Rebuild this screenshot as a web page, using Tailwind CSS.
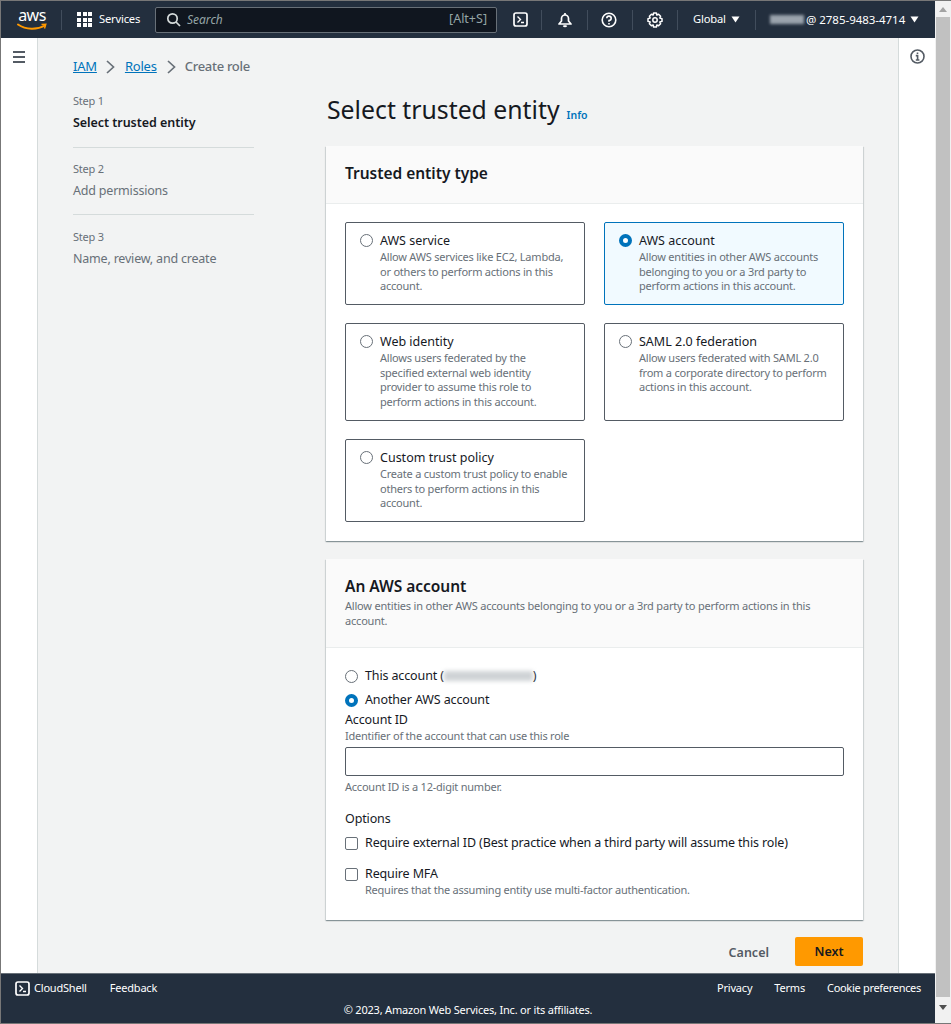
<!DOCTYPE html>
<html lang="en">
<head>
    <meta charset="UTF-8">
    <title>Create role | IAM</title>
    <script src="https://cdn.jsdelivr.net/npm/@tailwindcss/browser@4"></script>
</head>
<body class="h-[1024px] overflow-hidden bg-white font-['Noto_Sans',sans-serif] text-[#16191f]">
<div class="flex h-[1024px] flex-col border-t border-b border-l border-[#777]">
  <div class="flex min-h-0 flex-1">
    <div class="flex w-[934px] flex-col">

      <!-- Top bar -->
      <header class="flex h-[37px] shrink-0 items-center bg-[#232f3e] text-white">
        <div class="relative ml-[16px] h-[30px] w-[30px] shrink-0">
          <span class="block text-center text-[16px] leading-[20px] tracking-[-0.5px]">aws</span>
          <svg class="absolute top-[17px] left-0" width="30" height="11" viewBox="0 0 30 11" fill="none"><path d="M1 2.5C9 8 20 8 28 3.5" stroke="#f90" stroke-width="2" stroke-linecap="round"/><path d="M24.5 2.5L28.8 2.2L27.5 6.5" stroke="#f90" stroke-width="1.4"/></svg>
        </div>
        <div class="ml-[14px] h-[20px] w-px bg-[#414d5c]"></div>
        <div class="ml-[15px] grid h-[15px] w-[15px] grid-cols-3 gap-[1.5px]">
          <i class="bg-white"></i><i class="bg-white"></i><i class="bg-white"></i><i class="bg-white"></i><i class="bg-white"></i><i class="bg-white"></i><i class="bg-white"></i><i class="bg-white"></i><i class="bg-white"></i>
        </div>
        <span class="ml-[7px] w-[40px] text-[11.2px] tracking-[-0.2px] whitespace-nowrap">Services</span>
        <div class="ml-[16px] flex h-[26px] w-[342px] items-center rounded-[2px] border border-[#687078] bg-[#10161f]">
          <svg class="ml-[10px]" width="15" height="15" viewBox="0 0 15 15" fill="none" stroke="#d5dbdb" stroke-width="1.7"><circle cx="6.5" cy="6.5" r="4.7"/><path d="M10 10L14 14"/></svg>
          <span class="ml-[6px] text-[12px] text-[#95a5a6] italic">Search</span>
          <span class="mr-[9px] ml-auto text-[12.5px] text-[#95a5a6]">[Alt+S]</span>
        </div>
        <svg class="ml-[16px]" width="15" height="15" viewBox="0 0 15 15" fill="none" stroke="#fff"><rect x="1" y="1" width="13" height="13" rx="2" stroke-width="1.7"/><path d="M4.5 4.5L7.5 7.5L4.5 10.5M8 10.5H11" stroke-width="1.4"/></svg>
        <div class="ml-[13px] h-[20px] w-px bg-[#414d5c]"></div>
        <svg class="ml-[15px]" width="16" height="16" viewBox="0 0 16 16" fill="none" stroke="#fff" stroke-width="1.7"><path d="M2 12L4.5 9V6.5A3.5 3.5 0 0 1 11.5 6.5V9L14 12Z" stroke-linejoin="round"/><path d="M6.5 13.5A1.7 1.7 0 0 0 9.5 13.5"/><path d="M8 1V3"/></svg>
        <div class="ml-[14px] h-[20px] w-px bg-[#414d5c]"></div>
        <svg class="ml-[13px]" width="16" height="16" viewBox="0 0 16 16" fill="none" stroke="#fff" stroke-width="1.6"><circle cx="8" cy="8" r="6.8"/><path d="M5.8 6.2A2.2 2.2 0 1 1 8 8.5V9.8"/><path d="M8 11V12.6"/></svg>
        <div class="ml-[15px] h-[20px] w-px bg-[#414d5c]"></div>
        <svg class="ml-[14px]" width="16" height="16" viewBox="0 0 16 16" fill="none" stroke="#fff"><circle cx="8" cy="8" r="2.2" stroke-width="1.5"/><path d="M6.6 1H9.4L9.8 3L11.6 2.2L13.6 4.2L12.8 6L15 6.6V9.4L12.8 10L13.6 11.8L11.6 13.8L9.8 13L9.4 15H6.6L6.2 13L4.4 13.8L2.4 11.8L3.2 10L1 9.4V6.6L3.2 6L2.4 4.2L4.4 2.2L6.2 3Z" stroke-width="1.5" stroke-linejoin="round"/></svg>
        <div class="ml-[14px] h-[20px] w-px bg-[#414d5c]"></div>
        <span class="ml-[15px] w-[33px] text-[11.2px] tracking-[-0.2px] whitespace-nowrap">Global</span>
        <svg class="ml-[5px]" width="9" height="7" viewBox="0 0 9 7"><path d="M0.5 0.5H8.5L4.5 6.5Z" fill="#fff"/></svg>
        <div class="ml-[15px] h-[20px] w-px bg-[#414d5c]"></div>
        <div class="ml-[14px] h-[9px] w-[34px] bg-[#9aa3ac] blur-[1.5px]"></div>
        <span class="ml-[2px] text-[11.5px] tracking-[-0.03px] whitespace-nowrap">@ 2785-9483-4714</span>
        <svg class="ml-[5px]" width="9" height="7" viewBox="0 0 9 7"><path d="M0.5 0.5H8.5L4.5 6.5Z" fill="#fff"/></svg>
      </header>

      <div class="flex min-h-0 flex-1">
        <!-- Left rail -->
        <div class="w-[37px] shrink-0 border-r border-[#d5dbdb] bg-white pt-[13px] pl-[11px]">
          <svg width="14" height="12" viewBox="0 0 14 12" fill="none" stroke="#545b64" stroke-width="2"><path d="M1 1H13M1 6H13M1 11H13"/></svg>
        </div>

        <!-- Main -->
        <main class="flex min-w-0 flex-1 bg-[#f2f3f3]">
          <div class="w-[288px] shrink-0 pl-[35px]">
            <nav class="mt-[19px] flex h-[20px] items-center text-[13px] tracking-[-0.2px]">
              <a class="text-[#0073bb] underline">IAM</a>
              <svg class="mr-[10px] ml-[9px]" width="9" height="14" viewBox="0 0 9 14" fill="none" stroke="#687078" stroke-width="1.7"><path d="M1 1L7.5 7L1 13"/></svg>
              <a class="text-[#0073bb] underline">Roles</a>
              <svg class="mr-[9px] ml-[10px]" width="9" height="14" viewBox="0 0 9 14" fill="none" stroke="#687078" stroke-width="1.7"><path d="M1 1L7.5 7L1 13"/></svg>
              <span class="whitespace-nowrap font-medium tracking-[-0.3px] text-[#687078]">Create role</span>
            </nav>
            <ol class="mt-[16px] w-[181px] text-[12.5px] tracking-[-0.2px]">
              <li class="border-b border-[#d5dbdb] pb-[14px]">
                <div class="text-[11px] leading-[16px] text-[#687078]">Step 1</div>
                <div class="mt-[4px] leading-[20px] font-semibold tracking-[-0.05px]">Select trusted entity</div>
              </li>
              <li class="border-b border-[#d5dbdb] pt-[13px] pb-[13px]">
                <div class="text-[11px] leading-[16px] text-[#687078]">Step 2</div>
                <div class="mt-[4px] leading-[20px] text-[#687078]">Add permissions</div>
              </li>
              <li class="pt-[14px]">
                <div class="text-[11px] leading-[16px] text-[#687078]">Step 3</div>
                <div class="mt-[4px] leading-[20px] text-[#687078]">Name, review, and create</div>
              </li>
            </ol>
          </div>

          <div class="w-[537px] shrink-0 pt-[53px]">
            <div class="flex h-[37px] items-end">
              <h1 class="ml-[1px] text-[24.8px] leading-[37px]">Select trusted entity</h1>
              <a class="mb-[4px] ml-[7px] text-[10.5px] font-semibold text-[#0073bb]">Info</a>
            </div>

            <section class="mt-[18px] h-[395px] bg-white shadow-[0_1px_1px_0_rgba(0,28,36,0.3),1px_1px_1px_0_rgba(0,28,36,0.1),-1px_1px_1px_0_rgba(0,28,36,0.1)]">
              <div class="flex h-[58px] items-center border-b border-[#eaeded] bg-[#fafafa] px-[19px] pb-[2px]">
                <h2 class="text-[15.5px] font-semibold tracking-[-0.03px]">Trusted entity type</h2>
              </div>
              <div class="grid grid-cols-2 gap-x-[19px] gap-y-[18px] px-[19px] pt-[18px]">
                <label class="flex h-[83px] rounded-[2px] border border-[#545b64] pt-[9px] pl-[14px]">
                  <span class="mt-[2px] h-[13px] w-[13px] shrink-0 rounded-full border border-[#687078] bg-white"></span>
                  <span class="ml-[7px]">
                    <span class="block text-[12.5px] leading-[18px] text-[#16191f]">AWS service</span>
                    <span class="block text-[11px] leading-[14.5px] tracking-[-0.22px] text-[#687078]">Allow AWS services like EC2, Lambda,<br>or others to perform actions in this<br>account.</span>
                  </span>
                </label>
                <label class="flex h-[83px] rounded-[2px] border border-[#0073bb] bg-[#f1faff] pt-[9px] pl-[14px]">
                  <span class="mt-[2px] h-[13px] w-[13px] shrink-0 rounded-full border-[4px] border-[#0073bb] bg-white"></span>
                  <span class="ml-[7px]">
                    <span class="block text-[12.5px] leading-[18px] text-[#16191f]">AWS account</span>
                    <span class="block text-[11px] leading-[14.5px] tracking-[-0.22px] text-[#687078]">Allow entities in other AWS accounts<br>belonging to you or a 3rd party to<br>perform actions in this account.</span>
                  </span>
                </label>
                <label class="flex h-[98px] rounded-[2px] border border-[#545b64] pt-[9px] pl-[14px]">
                  <span class="mt-[2px] h-[13px] w-[13px] shrink-0 rounded-full border border-[#687078] bg-white"></span>
                  <span class="ml-[7px]">
                    <span class="block text-[12.5px] leading-[18px] text-[#16191f]">Web identity</span>
                    <span class="block text-[11px] leading-[14.5px] tracking-[-0.22px] text-[#687078]">Allows users federated by the<br>specified external web identity<br>provider to assume this role to<br>perform actions in this account.</span>
                  </span>
                </label>
                <label class="flex h-[98px] rounded-[2px] border border-[#545b64] pt-[9px] pl-[14px]">
                  <span class="mt-[2px] h-[13px] w-[13px] shrink-0 rounded-full border border-[#687078] bg-white"></span>
                  <span class="ml-[7px]">
                    <span class="block text-[12.5px] leading-[18px] text-[#16191f]">SAML 2.0 federation</span>
                    <span class="block text-[11px] leading-[14.5px] tracking-[-0.22px] text-[#687078]">Allow users federated with SAML 2.0<br>from a corporate directory to perform<br>actions in this account.</span>
                  </span>
                </label>
                <label class="flex h-[83px] rounded-[2px] border border-[#545b64] pt-[9px] pl-[14px]">
                  <span class="mt-[2px] h-[13px] w-[13px] shrink-0 rounded-full border border-[#687078] bg-white"></span>
                  <span class="ml-[7px]">
                    <span class="block text-[12.5px] leading-[18px] text-[#16191f]">Custom trust policy</span>
                    <span class="block text-[11px] leading-[14.5px] tracking-[-0.22px] text-[#687078]">Create a custom trust policy to enable<br>others to perform actions in this<br>account.</span>
                  </span>
                </label>
              </div>
            </section>

            <section class="mt-[18px] h-[361px] bg-white shadow-[0_1px_1px_0_rgba(0,28,36,0.3),1px_1px_1px_0_rgba(0,28,36,0.1),-1px_1px_1px_0_rgba(0,28,36,0.1)]">
              <div class="h-[89px] border-b border-[#eaeded] bg-[#fafafa] px-[19px] pt-[17px]">
                <h2 class="text-[15.5px] leading-[20px] font-semibold tracking-[-0.03px]">An AWS account</h2>
                <p class="mt-[3px] text-[11px] leading-[14.5px] tracking-[-0.2px] text-[#687078]">Allow entities in other AWS accounts belonging to you or a 3rd party to perform actions in this<br>account.</p>
              </div>
              <div class="px-[19px] pt-[20px] text-[12.5px] tracking-[-0.13px]">
                <div class="flex h-[16px] items-center">
                  <span class="h-[13px] w-[13px] rounded-full border border-[#687078] bg-white"></span>
                  <span class="ml-[7px]">This account (</span>
                  <span class="h-[10px] w-[89px] bg-[#cfd3d6] blur-[2px]"></span>
                  <span>)</span>
                </div>
                <div class="mt-[8px] flex h-[16px] items-center">
                  <span class="h-[13px] w-[13px] rounded-full border-[4px] border-[#0073bb] bg-white"></span>
                  <span class="ml-[7px]">Another AWS account</span>
                </div>
                <div class="mt-[4px] leading-[16px]">Account ID</div>
                <div class="text-[11px] leading-[15px] tracking-[-0.23px] text-[#687078]">Identifier of the account that can use this role</div>
                <input class="mt-[4px] block h-[29px] w-[499px] rounded-[2px] border border-[#545b64] bg-white" type="text">
                <div class="mt-[3px] text-[11px] leading-[15px] tracking-[-0.23px] text-[#687078]">Account ID is a 12-digit number.</div>
                <div class="mt-[17px] leading-[16px]">Options</div>
                <div class="mt-[8px] flex h-[16px] items-center">
                  <span class="h-[13px] w-[13px] rounded-[2px] border border-[#687078] bg-white"></span>
                  <span class="ml-[7px]">Require external ID (Best practice when a third party will assume this role)</span>
                </div>
                <div class="mt-[15px] flex h-[16px] items-center">
                  <span class="h-[13px] w-[13px] rounded-[2px] border border-[#687078] bg-white"></span>
                  <span class="ml-[7px]">Require MFA</span>
                </div>
                <div class="pl-[20px] text-[11px] leading-[15px] tracking-[-0.23px] text-[#687078]">Requires that the assuming entity use multi-factor authentication.</div>
              </div>
            </section>

            <div class="mt-[17px] flex items-center justify-end">
              <span class="mt-[4px] mr-[26px] text-[12.5px] font-semibold text-[#545b64]">Cancel</span>
              <button class="h-[29px] w-[68px] rounded-[2px] bg-[#ff9900] pt-[2px] text-[12.5px] font-semibold text-[#16191f]">Next</button>
            </div>
          </div>
          <div class="min-w-0 flex-1"></div>
        </main>

        <!-- Right rail -->
        <div class="flex w-[37px] shrink-0 justify-center border-l border-[#d5dbdb] bg-white pt-[11px]">
          <svg width="15" height="15" viewBox="0 0 15 15" fill="none" stroke="#545b64" stroke-width="1.6"><circle cx="7.5" cy="7.5" r="6.5"/><path d="M5.8 6.6H7.6V11M5.8 11H9.4M7.5 3.4V5" /></svg>
        </div>
      </div>

      <!-- Footer -->
      <footer class="h-[50px] shrink-0 border-t border-[#687078] bg-[#232f3e] text-[11px] tracking-[-0.2px] text-white">
        <div class="flex h-[28px] items-center pr-[14px] pl-[14px]">
          <svg width="15" height="15" viewBox="0 0 15 15" fill="none" stroke="#fff"><rect x="1" y="1" width="13" height="13" rx="2" stroke-width="1.7"/><path d="M4.5 4.5L7.5 7.5L4.5 10.5M8 10.5H11" stroke-width="1.4"/></svg>
          <span class="ml-[4px]">CloudShell</span>
          <span class="ml-[23px]">Feedback</span>
          <span class="ml-auto">Privacy</span>
          <span class="ml-[22px]">Terms</span>
          <span class="ml-[22px] tracking-[-0.3px]">Cookie preferences</span>
        </div>
        <div class="text-center leading-[16px]">© 2023, Amazon Web Services, Inc. or its affiliates.</div>
      </footer>
    </div>

    <!-- Window scrollbar -->
    <div class="flex w-[16px] shrink-0 flex-col items-center bg-[#f1f1f1]">
      <svg class="mt-[6px]" width="8" height="5" viewBox="0 0 8 5"><path d="M0 5L4 0L8 5Z" fill="#a3a3a3"/></svg>
      <div class="mt-[5px] h-[980px] w-[14px] bg-[#c1c1c1]"></div>
      <svg class="mt-[8px]" width="8" height="5" viewBox="0 0 8 5"><path d="M0 0H8L4 5Z" fill="#505050"/></svg>
    </div>
  </div>
</div>
</body>
</html>
